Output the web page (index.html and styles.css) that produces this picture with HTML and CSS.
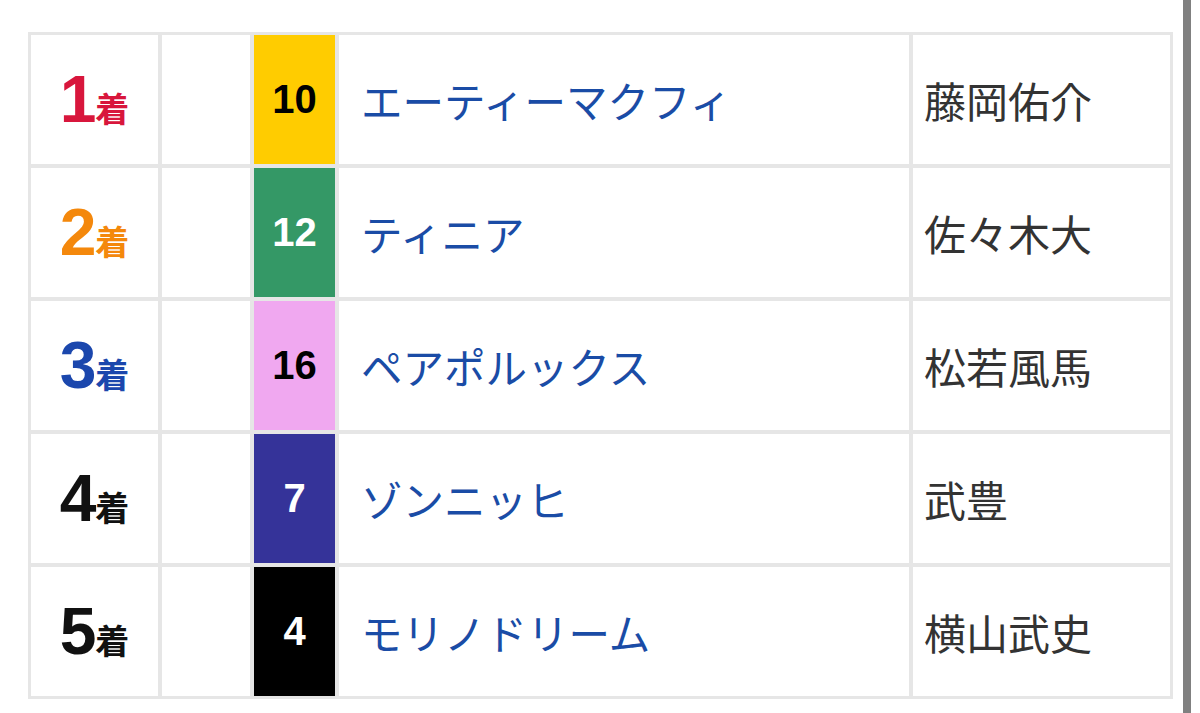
FILE: index.html
```html
<!DOCTYPE html>
<html lang="ja">
<head>
<meta charset="utf-8">
<title>着順</title>
<link rel="stylesheet" href="styles.css">
</head>
<body>
<div class="results">
  <div class="cell rank r1"><span class="num">1</span><span class="chaku">着</span></div>
  <div class="cell blank"></div>
  <div class="cell waku w-yellow">10</div>
  <div class="cell horse">エーティーマクフィ</div>
  <div class="cell jockey">藤岡佑介</div>

  <div class="cell rank r2"><span class="num">2</span><span class="chaku">着</span></div>
  <div class="cell blank"></div>
  <div class="cell waku w-green">12</div>
  <div class="cell horse">ティニア</div>
  <div class="cell jockey">佐々木大</div>

  <div class="cell rank r3"><span class="num">3</span><span class="chaku">着</span></div>
  <div class="cell blank"></div>
  <div class="cell waku w-pink">16</div>
  <div class="cell horse">ペアポルックス</div>
  <div class="cell jockey">松若風馬</div>

  <div class="cell rank"><span class="num">4</span><span class="chaku">着</span></div>
  <div class="cell blank"></div>
  <div class="cell waku w-blue">7</div>
  <div class="cell horse">ゾンニッヒ</div>
  <div class="cell jockey">武豊</div>

  <div class="cell rank"><span class="num">5</span><span class="chaku">着</span></div>
  <div class="cell blank"></div>
  <div class="cell waku w-black">4</div>
  <div class="cell horse">モリノドリーム</div>
  <div class="cell jockey">横山武史</div>
</div>
<div class="scrollbar"></div>
</body>
</html>
```
FILE: styles.css
```css
html, body {
  margin: 0;
  padding: 0;
  background: #ffffff;
}
body {
  padding: 32px 0 0 28px;
  font-family: "Noto Sans CJK JP", "Liberation Sans", sans-serif;
}
.results {
  display: grid;
  grid-template-columns: 127px 88px 81px 570px 257px;
  grid-template-rows: repeat(5, 129px);
  gap: 4px;
  padding: 3px;
  width: max-content;
  background: #e6e6e6;
}
.cell {
  background: #ffffff;
  display: flex;
  align-items: center;
}
.rank {
  justify-content: center;
  align-items: baseline;
  padding-top: 31px;
  box-sizing: border-box;
  color: #111111;
  font-weight: bold;
}
.rank .num {
  font-family: "Liberation Sans", Arial, sans-serif;
  font-size: 66px;
  line-height: 1;
  letter-spacing: -1px;
}
.rank .chaku {
  font-family: "Noto Sans CJK JP", sans-serif;
  font-size: 34px;
  line-height: 1;
}
.r1 { color: #d8163c; }
.r2 { color: #f4880c; }
.r3 { color: #1b47ad; }
.waku {
  justify-content: center;
  font-family: "Liberation Sans", Arial, sans-serif;
  font-weight: bold;
  font-size: 40px;
  color: #ffffff;
}
.w-yellow { background: #ffcc00; color: #000000; }
.w-green { background: #349866; }
.w-pink { background: #f0a8f0; color: #000000; }
.w-blue { background: #353399; }
.w-black { background: #000000; }
.horse {
  padding-left: 22px;
  font-size: 41.5px;
  color: #1a4ca6;
}
.jockey {
  padding-left: 11px;
  font-size: 42px;
  color: #333333;
}
.scrollbar {
  position: fixed;
  top: 0;
  right: 9px;
  width: 8px;
  height: 100%;
  background: #808080;
}
```
